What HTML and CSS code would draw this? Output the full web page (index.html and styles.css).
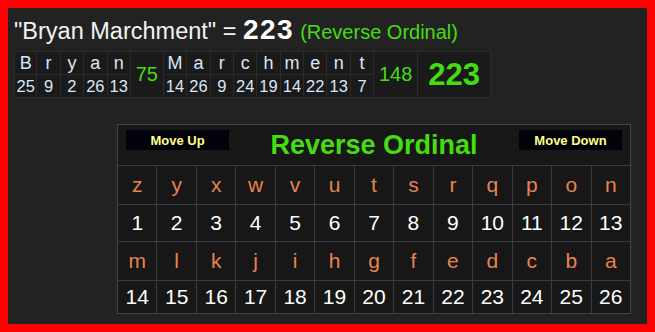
FILE: index.html
```html
<!DOCTYPE html>
<html>
<head>
<meta charset="utf-8">
<link rel="stylesheet" href="styles.css">
</head>
<body>
<div class="frame">
  <div class="title">
    <span class="phrase">"Bryan Marchment" = </span><span class="total">223</span><span class="cipher">(Reverse Ordinal)</span>
  </div>
  <div class="breakdown">
    <div class="col"><div class="l">B</div><div class="n">25</div></div>
    <div class="col"><div class="l">r</div><div class="n">9</div></div>
    <div class="col"><div class="l">y</div><div class="n">2</div></div>
    <div class="col"><div class="l">a</div><div class="n">26</div></div>
    <div class="col"><div class="l">n</div><div class="n">13</div></div>
    <div class="sum s1">75</div>
    <div class="col"><div class="l">M</div><div class="n">14</div></div>
    <div class="col"><div class="l">a</div><div class="n">26</div></div>
    <div class="col"><div class="l">r</div><div class="n">9</div></div>
    <div class="col"><div class="l">c</div><div class="n">24</div></div>
    <div class="col"><div class="l">h</div><div class="n">19</div></div>
    <div class="col"><div class="l">m</div><div class="n">14</div></div>
    <div class="col"><div class="l">e</div><div class="n">22</div></div>
    <div class="col"><div class="l">n</div><div class="n">13</div></div>
    <div class="col"><div class="l">t</div><div class="n">7</div></div>
    <div class="sum s2">148</div>
    <div class="grand">223</div>
  </div>
  <div class="panel">
    <div class="head">
      <button class="btn">Move Up</button>
      <div class="ptitle">Reverse Ordinal</div>
      <button class="btn">Move Down</button>
    </div>
    <div class="k">z</div><div class="k">y</div><div class="k">x</div><div class="k">w</div><div class="k">v</div><div class="k">u</div><div class="k">t</div><div class="k">s</div><div class="k">r</div><div class="k">q</div><div class="k">p</div><div class="k">o</div><div class="k">n</div>
    <div class="v">1</div><div class="v">2</div><div class="v">3</div><div class="v">4</div><div class="v">5</div><div class="v">6</div><div class="v">7</div><div class="v">8</div><div class="v">9</div><div class="v">10</div><div class="v">11</div><div class="v">12</div><div class="v">13</div>
    <div class="k">m</div><div class="k">l</div><div class="k">k</div><div class="k">j</div><div class="k">i</div><div class="k">h</div><div class="k">g</div><div class="k">f</div><div class="k">e</div><div class="k">d</div><div class="k">c</div><div class="k">b</div><div class="k">a</div>
    <div class="v">14</div><div class="v">15</div><div class="v">16</div><div class="v">17</div><div class="v">18</div><div class="v">19</div><div class="v">20</div><div class="v">21</div><div class="v">22</div><div class="v">23</div><div class="v">24</div><div class="v">25</div><div class="v">26</div>
  </div>
</div>
</body>
</html>
```
FILE: styles.css
```css
html, body {
  margin: 0;
  padding: 0;
  background: #ff0000;
}
.frame {
  box-sizing: border-box;
  width: 655px;
  height: 332px;
  border: 8px solid #ff0000;
  background: #222222;
  padding: 0 0 0 6px;
  display: flex;
  flex-direction: column;
  font-family: "Liberation Sans", Arial, sans-serif;
}
.title {
  height: 43px;
  display: flex;
  align-items: baseline;
  line-height: 43px;
  color: #f2f2f2;
  white-space: pre;
}
.phrase {
  font-size: 23.5px;
}
.total {
  font-size: 28px;
  font-weight: bold;
  color: #ffffff;
  letter-spacing: 1.5px;
}
.cipher {
  font-size: 20px;
  color: #44dd11;
  margin-left: 6px;
}
.breakdown {
  display: flex;
  width: 477px;
  height: 47px;
  background: #1a1a1a;
  align-self: flex-start;
}
.col {
  width: 23.4px;
  display: flex;
  flex-direction: column;
}
.col > div {
  box-sizing: border-box;
  display: flex;
  align-items: center;
  justify-content: center;
  border-right: 1px solid #2a2a2a;
  border-bottom: 1px solid #2a2a2a;
  color: #d8e8f8;
}
.col .l {
  height: 24px;
  font-size: 18px;
  border-top: 1px solid #2a2a2a;
}
.col .n {
  height: 23px;
  font-size: 16.5px;
}
.col:first-child > div {
  border-left: 1px solid #2a2a2a;
}
.sum, .grand {
  box-sizing: border-box;
  display: flex;
  align-items: center;
  justify-content: center;
  border: 1px solid #2a2a2a;
  border-left: 0;
  color: #44dd11;
}
.sum {
  font-size: 20px;
}
.s1 { width: 33px; }
.s2 { width: 44px; }
.grand {
  width: 73px;
  font-size: 31px;
  font-weight: bold;
}
.panel {
  margin-top: 26px;
  align-self: flex-end;
  margin-right: 16px;
  width: 514px;
  box-sizing: border-box;
  border: 1px solid #454545;
  background: #3b3b3b;
  display: grid;
  grid-template-columns: repeat(13, 1fr);
  grid-template-rows: 40px 38px 36px 38px 32px;
  gap: 1px;
}
.head {
  grid-column: 1 / -1;
  background: #171717;
  display: flex;
  align-items: flex-start;
  justify-content: space-between;
  padding: 5px 8px 0 8px;
}
.btn {
  width: 103px;
  height: 20px;
  border: 0;
  padding: 0;
  background: #02020a;
  color: #ffff88;
  font-family: "Liberation Sans", Arial, sans-serif;
  font-size: 13px;
  font-weight: bold;
}
.ptitle {
  color: #44dd11;
  font-size: 27px;
  font-weight: bold;
  line-height: 30px;
}
.k, .v {
  background: #171717;
  display: flex;
  align-items: center;
  justify-content: center;
  font-size: 21px;
}
.k { color: #e8834f; }
.v { color: #ffffff; }
```
